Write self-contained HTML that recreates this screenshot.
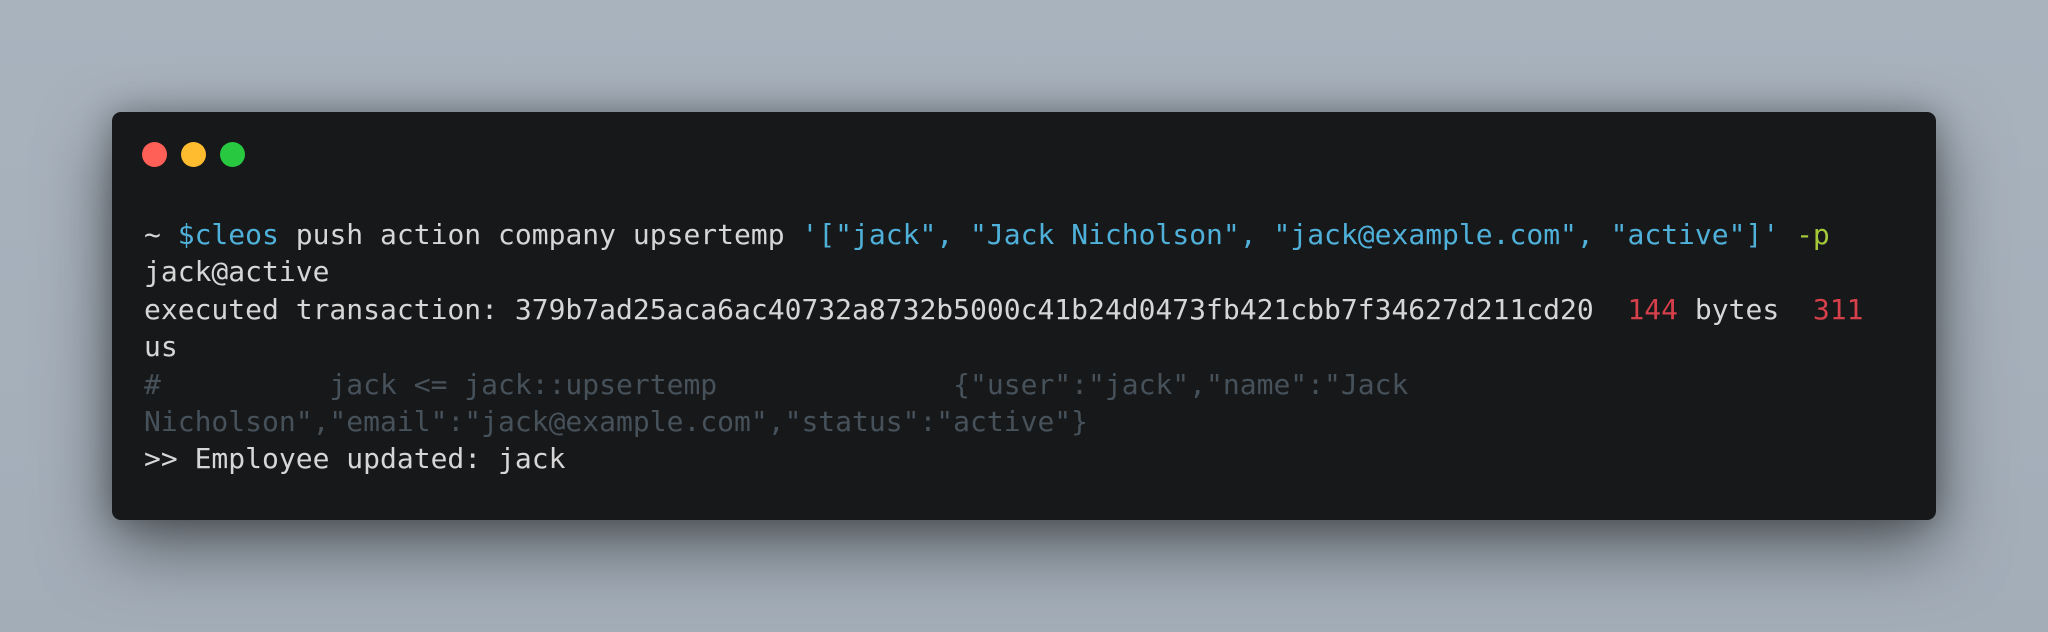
<!DOCTYPE html>
<html><head><meta charset="utf-8"><style>
html,body{margin:0;padding:0;width:2048px;height:632px;overflow:hidden;background:#a7b1bc;}
body{background:linear-gradient(180deg,#a9b3be 0%,#a3adb8 100%);position:relative;}
.win{position:absolute;left:112px;top:112px;width:1824px;height:408px;background:#17181a;border-radius:9px;box-shadow:0 25px 70px rgba(0,0,0,0.5),0 0 30px rgba(0,0,0,0.25);}
.dot{position:absolute;top:142px;width:25px;height:25px;border-radius:50%;}
pre{position:absolute;left:144px;top:216px;margin:0;font-family:"DejaVu Sans Mono","Liberation Mono",monospace;font-size:28px;line-height:37.4px;color:#d6d6d6;}
.c{color:#4fb1da}.g{color:#a4c83a}.r{color:#d5404b}.m{color:#46515a}
</style></head><body>
<div class="win"></div>
<div class="dot" style="left:142px;background:#fe5f57"></div>
<div class="dot" style="left:181px;background:#febc2e"></div>
<div class="dot" style="left:220px;background:#28c840"></div>
<pre>~ <span class="c">$cleos</span> push action company upsertemp <span class="c">'["jack", "Jack Nicholson", "jack@example.com", "active"]'</span> <span class="g">-p</span>
jack@active
executed transaction: 379b7ad25aca6ac40732a8732b5000c41b24d0473fb421cbb7f34627d211cd20  <span class="r">144</span> bytes  <span class="r">311</span>
us
<span class="m">#          jack &lt;= jack::upsertemp              {"user":"jack","name":"Jack
Nicholson","email":"jack@example.com","status":"active"}</span>
&gt;&gt; Employee updated: jack</pre>
</body></html>
